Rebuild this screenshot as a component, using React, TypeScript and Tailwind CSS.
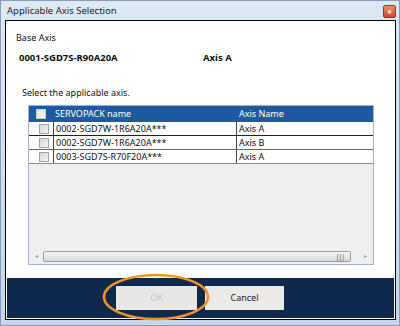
import React from "react";

const rows = [
  { name: "0002-SGD7W-1R6A20A***", axis: "Axis A", line: "border-[#222]" },
  { name: "0002-SGD7W-1R6A20A***", axis: "Axis B", line: "border-[#666]" },
  { name: "0003-SGD7S-R70F20A***", axis: "Axis A", line: "border-[#888]" },
];

const Box = () => (
  <span className="block w-[10px] h-[10px] border border-[#a3a3a3] bg-gradient-to-br from-[#d6d6d6] to-[#f4f4f4]" />
);

const App: React.FC = () => {
  return (
    <div
      className="w-[400px] h-[326px] border border-[#8b9bb0] bg-gradient-to-b from-[#dde9f5] to-[#c3d6ec] flex flex-col text-[9px] text-[#111]"
      style={{ fontFamily: '"Noto Sans", "DejaVu Sans", sans-serif' }}
    >
      {/* Title bar */}
      <div className="h-[19px] flex items-center justify-between pl-[6px] pr-[3px]">
        <span className="text-[9.5px] text-[#1c1c1c] mt-[1px]">Applicable Axis Selection</span>
        <div className="w-[13px] h-[13px] mt-[2px] rounded-[2px] border border-[#8a3b2a] bg-gradient-to-b from-[#eb8c6e] to-[#c9462b] flex items-center justify-center">
          <span className="text-white text-[8px] leading-none font-bold">×</span>
        </div>
      </div>

      {/* Client area */}
      <div className="ml-[4px] mr-[3px] h-[300px] border border-black bg-white p-[1px] flex flex-col">
        <div className="flex-1 bg-white flex flex-col">
          <div className="pl-[9px] pt-[10px] leading-[12px]">Base Axis</div>
          <div className="flex pl-[12px] pt-[8px] font-bold text-[9.5px] leading-[12px]">
            <span className="w-[184px]">0001-SGD7S-R90A20A</span>
            <span>Axis A</span>
          </div>
          <div className="pl-[15px] pt-[23px] leading-[12px]">Select the applicable axis.</div>

          {/* Table */}
          <div className="ml-[21px] mt-[6px] w-[346px] h-[160px] border border-[#9fb3cc] bg-[#efefef] flex flex-col">
            <div className="h-[16px] bg-[#1d5a9f] flex items-center text-white">
              <div className="w-[24px] flex justify-center">
                <span className="block w-[10px] h-[10px] border border-[#cfcfcf] bg-gradient-to-br from-[#e4e4e4] to-[#f8f8f8]" />
              </div>
              <div className="w-[183px] pl-[2px]">SERVOPACK name</div>
              <div className="pl-[3px]">Axis Name</div>
            </div>
            {rows.map((r, i) => (
              <div key={i} className={`h-[14px] bg-white flex items-center border-b ${r.line}`}>
                <div className="w-[24px] h-full flex items-center justify-center pl-[6px]">
                  <Box />
                </div>
                <div className="w-[183px] h-full border-l border-[#444] pl-[2px] flex items-center">{r.name}</div>
                <div className="flex-1 h-full border-l border-[#444] pl-[2px] flex items-center">{r.axis}</div>
              </div>
            ))}
            <div className="flex-1" />
            {/* Horizontal scrollbar */}
            <div className="h-[14px] mb-[1px] flex items-center bg-[#efefef] px-[2px]">
              <span className="w-[11px] text-[6px] text-[#999] text-center">◂</span>
              <div className="ml-[1px] w-[308px] h-[11px] rounded-[2px] border border-[#9a9a9a] bg-gradient-to-b from-[#f6f6f6] to-[#d8d8d8] flex items-center justify-end pr-[6px]">
                <span className="text-[7px] leading-none text-[#555] tracking-[-1px]">|||</span>
              </div>
              <div className="flex-1" />
              <span className="w-[11px] text-[6px] text-[#999] text-center">▸</span>
            </div>
          </div>

          <div className="flex-1" />

          {/* Footer */}
          <div className="relative h-[40px] bg-[#0e294b] flex items-center pl-[109px] gap-[8px]">
            <button className="w-[81px] h-[24px] bg-[#e9e7e5] text-[#c4c4c4] text-[9px]">OK</button>
            <button className="w-[79px] h-[24px] bg-[#eceae8] text-[#222] text-[9px]">Cancel</button>
            <svg className="absolute left-[94px] top-[-5px]" width="112" height="50" viewBox="0 0 112 50">
              <ellipse cx="55" cy="24" rx="52" ry="22" fill="none" stroke="#f29424" strokeWidth="2.5" />
            </svg>
          </div>
        </div>
      </div>
    </div>
  );
};

export default App;
